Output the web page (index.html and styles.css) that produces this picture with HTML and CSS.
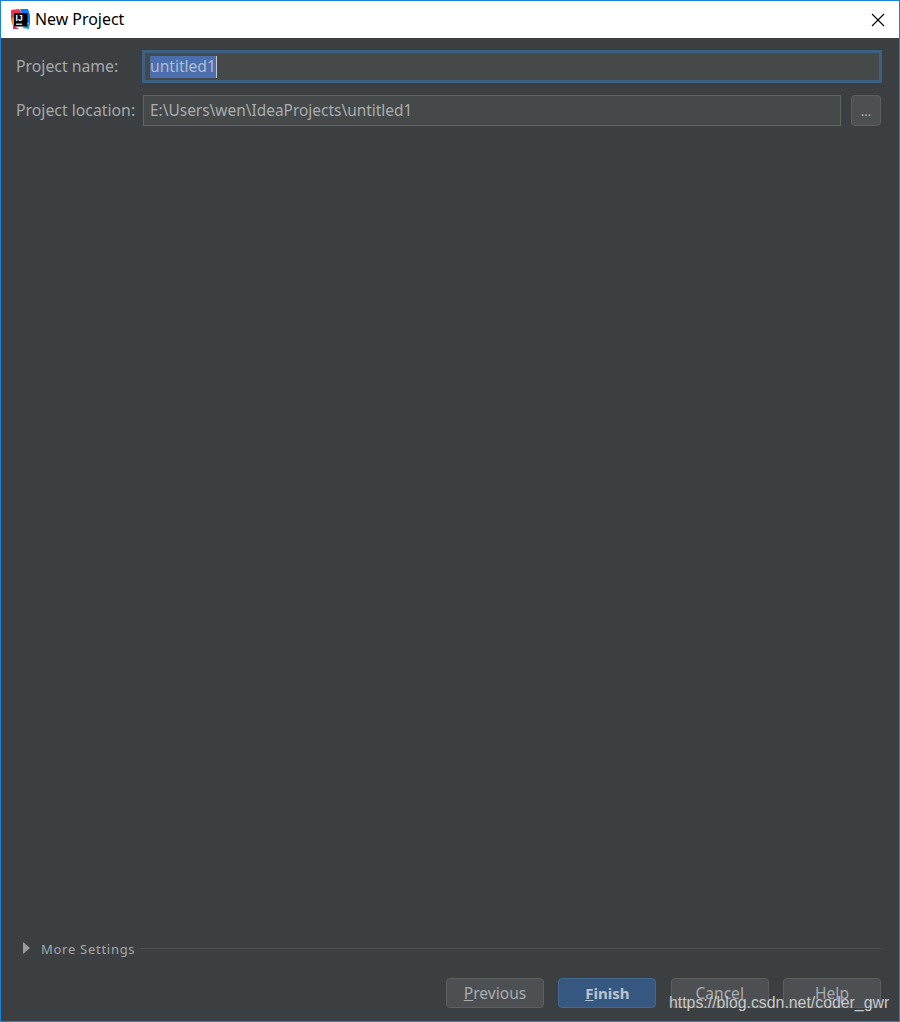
FILE: index.html
```html
<!DOCTYPE html>
<html lang="en">
<head>
<meta charset="utf-8">
<title>New Project</title>
<link rel="stylesheet" href="styles.css">
</head>
<body>
<div class="window">
  <header class="titlebar">
    <svg class="logo" width="20" height="20" viewBox="0 0 20 20">
      <polygon points="1,1 9,0 12,4 6,11 3,17 1,10" fill="#f2325f"/>
      <polygon points="1,10 4,8 5,16 2,15" fill="#fb8c2a"/>
      <polygon points="10,0 18,0 20,6 20,16 14,10" fill="#087cfa"/>
      <polygon points="3,16 9,20 3,20" fill="#e9295a"/>
      <polygon points="12,19 20,14 19,20" fill="#1f9ed8"/>
      <rect x="4" y="4" width="13.5" height="13.5" fill="#000"/>
      <rect x="6" y="14.6" width="6.2" height="1.2" fill="#fff"/>
      <text class="logo-text" x="5.6" y="12.2">IJ</text>
    </svg>
    <span class="title">New Project</span>
    <svg class="close" width="14" height="14" viewBox="0 0 14 14">
      <path d="M1 1L13 13M13 1L1 13" stroke="#000" stroke-width="1.1" fill="none"/>
    </svg>
  </header>
  <main class="body">
    <div class="form">
      <div class="row row-name">
        <span class="label">Project name:</span>
        <div class="field field-focus"><span class="selected">untitled1</span><span class="caret"></span></div>
      </div>
      <div class="row row-location">
        <span class="label">Project location:</span>
        <div class="field">E:\Users\wen\IdeaProjects\untitled1</div>
        <div class="browse">...</div>
      </div>
    </div>
    <div class="more">
      <span class="triangle"></span>
      <span class="more-label">More Settings</span>
      <span class="rule"></span>
    </div>
    <div class="actions">
      <div class="btn"><u>P</u>revious</div>
      <div class="btn btn-primary"><u>F</u>inish</div>
      <div class="btn">Cancel</div>
      <div class="btn">Help</div>
    </div>
  </main>
  <div class="watermark">https://blog.csdn.net/coder_gwr</div>
</div>
</body>
</html>
```
FILE: styles.css
```css
* { box-sizing: border-box; }
html, body { margin: 0; padding: 0; }
body { width: 900px; height: 1022px; overflow: hidden; font-family: "Noto Sans", "Open Sans", sans-serif; }
.window { position: relative; width: 900px; height: 1022px; border: 1px solid #1883d7; display: flex; flex-direction: column; }
.titlebar { height: 37px; background: #fff; display: flex; align-items: center; padding: 0 14px 0 9px; flex: none; }
.logo { flex: none; margin-top: -2px; }
.logo-text { font-family: "Liberation Sans", sans-serif; font-size: 8.5px; font-weight: 700; fill: #fff; }
.title { font-size: 15.9px; color: #000; margin-left: 5px; line-height: 20px; margin-top: -2px; }
.close { margin-left: auto; }
.body { flex: 1; background: #3c3f41; display: flex; flex-direction: column; padding: 12px 18px 13px 15px; color: #a9acae; }
.form { flex: 1; display: flex; flex-direction: column; gap: 12px; }
.row { display: flex; align-items: center; }
.label { font-size: 15.8px; color: #a6a8aa; width: 126px; flex: none; line-height: 20px; padding-bottom: 2px; height: 22px; white-space: nowrap; }
.field { flex: 1; height: 31px; margin-left: 1px; background: #45494a; border: 1px solid #646464; font-size: 15.45px; color: #a9adaf; line-height: 29px; padding-left: 6px; white-space: nowrap; }
.field-focus { height: 33px; margin-left: 0; border: 3px solid #3d6185; line-height: 27px; padding-left: 5px; display: flex; align-items: center; font-size: 15.6px; }
.selected { background: #4b6eaf; color: #b3bcc9; height: 22px; line-height: 21px; }
.caret { width: 1px; height: 22px; background: #c4c8cb; }
.row-location .field { margin-right: 10px; }
.row-location { height: 31px; }
.row-name { height: 33px; margin-right: -1px; }
.browse { width: 30px; height: 31px; flex: none; background: #4c5052; border: 1px solid #5e6060; border-radius: 4px; font-size: 13px; color: #bbbbbb; text-align: center; line-height: 31px; }
.more { display: flex; align-items: center; height: 20px; flex: none; margin-bottom: 19px; }
.triangle { width: 0; height: 0; margin-left: 7px; border-left: 7px solid #9a9c9e; border-top: 6px solid transparent; border-bottom: 6px solid transparent; margin-top: -2px; }
.more-label { margin-left: 11px; font-size: 13px; letter-spacing: 0.72px; color: #a3a7ab; white-space: nowrap; line-height: 20px; }
.rule { flex: 1; height: 1px; margin-left: 6px; background: #4d4f51; margin-top: -2px; }
.actions { display: flex; justify-content: flex-end; gap: 14.33px; flex: none; }
.btn { width: 98px; height: 30px; background: #4c5052; border: 1px solid #5e6060; border-radius: 4px; color: #a9acae; font-size: 15.6px; line-height: 28px; text-align: center; }
.btn-primary { background: #365880; border-color: #43688c; color: #bbc4ce; font-weight: 700; font-size: 15px; }
.watermark { position: absolute; left: 668px; top: 992px; font-family: "Liberation Sans", Arial, sans-serif; font-size: 15.85px; line-height: 20px; color: #c8cacb; white-space: nowrap; }
```
